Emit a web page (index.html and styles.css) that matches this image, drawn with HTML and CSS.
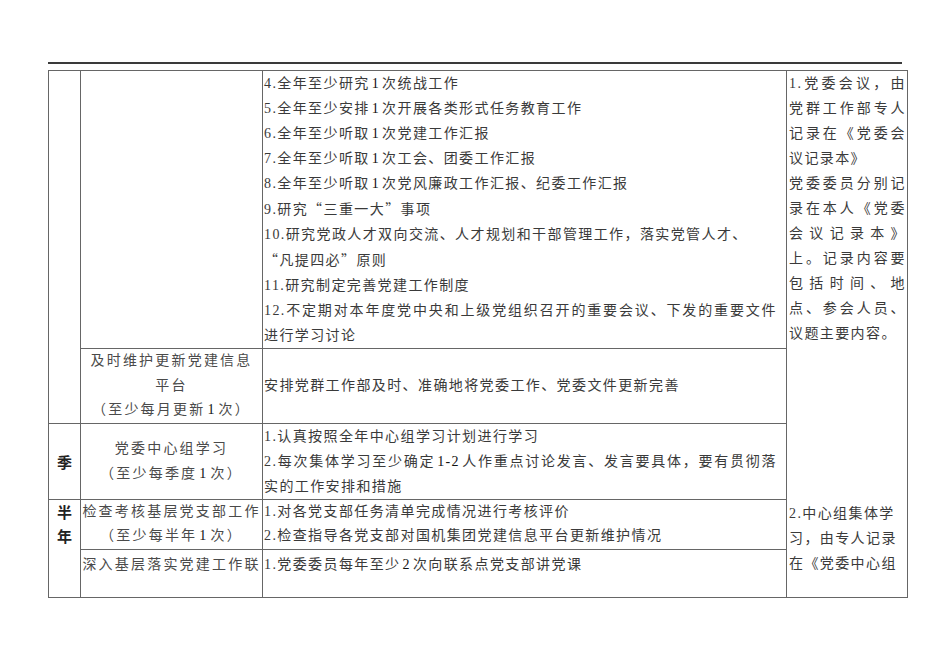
FILE: index.html
```html
<!DOCTYPE html>
<html lang="zh-CN">
<head>
<meta charset="utf-8">
<title>党委工作计划</title>
<link rel="stylesheet" href="styles.css">
</head>
<body>
<div class="page">
  <div class="rule"></div>
  <table class="plan">
    <colgroup>
      <col class="w1"><col class="w2"><col class="w3"><col class="w4">
    </colgroup>
    <tr class="r1">
      <td class="c1" rowspan="2"></td>
      <td class="c2"></td>
      <td class="c3">
        <div class="ln">4.全年至少研究<span class="n">1</span>次统战工作</div>
        <div class="ln">5.全年至少安排<span class="n">1</span>次开展各类形式任务教育工作</div>
        <div class="ln">6.全年至少听取<span class="n">1</span>次党建工作汇报</div>
        <div class="ln">7.全年至少听取<span class="n">1</span>次工会、团委工作汇报</div>
        <div class="ln">8.全年至少听取<span class="n">1</span>次党风廉政工作汇报、纪委工作汇报</div>
        <div class="ln">9.研究<span class="q">“</span>三重一大<span class="q">”</span>事项</div>
        <div class="ln">10.研究党政人才双向交流、人才规划和干部管理工作，落实党管人才、</div>
        <div class="ln"><span class="q">“</span>凡提四必<span class="q">”</span>原则</div>
        <div class="ln">11.研究制定完善党建工作制度</div>
        <div class="ln j">12.不定期对本年度党中央和上级党组织召开的重要会议、下发的重要文件</div>
        <div class="ln">进行学习讨论</div>
      </td>
      <td class="c4 a" rowspan="3">
        <div class="ln j">1.党委会议，由</div>
        <div class="ln j">党群工作部专人</div>
        <div class="ln j">记录在《党委会</div>
        <div class="ln">议记录本》</div>
        <div class="ln j">党委委员分别记</div>
        <div class="ln j">录在本人《党委</div>
        <div class="ln j">会议记录本》</div>
        <div class="ln j">上。记录内容要</div>
        <div class="ln j">包括时间、地</div>
        <div class="ln j">点、参会人员、</div>
        <div class="ln">议题主要内容。</div>
      </td>
    </tr>
    <tr class="r2">
      <td class="c2 mid tight">及时维护更新党建信息<br>平台<br>（至少每月更新<span class="n">1</span>次）</td>
      <td class="c3 mid tight">安排党群工作部及时、准确地将党委工作、党委文件更新完善</td>
    </tr>
    <tr class="r3">
      <td class="c1 mid">季</td>
      <td class="c2 mid">党委中心组学习<br>（至少每季度<span class="n">1</span>次）</td>
      <td class="c3">
        <div class="ln">1.认真按照全年中心组学习计划进行学习</div>
        <div class="ln j">2.每次集体学习至少确定<span class="n">1-2</span>人作重点讨论发言、发言要具体，要有贯彻落</div>
        <div class="ln">实的工作安排和措施</div>
      </td>
    </tr>
    <tr class="r4">
      <td class="c1 tight" rowspan="2">半<br>年</td>
      <td class="c2 tight">检查考核基层党支部工作<br>（至少每半年<span class="n">1</span>次）</td>
      <td class="c3 tight">
        <div class="ln">1.对各党支部任务清单完成情况进行考核评价</div>
        <div class="ln">2.检查指导各党支部对国机集团党建信息平台更新维护情况</div>
      </td>
      <td class="c4 b" rowspan="2">
        <div class="ln">2.中心组集体学</div>
        <div class="ln">习，由专人记录</div>
        <div class="ln">在《党委中心组</div>
      </td>
    </tr>
    <tr class="r5">
      <td class="c2 low">深入基层落实党建工作联</td>
      <td class="c3 low">
        <div class="ln">1.党委委员每年至少<span class="n">2</span>次向联系点党支部讲党课</div>
      </td>
    </tr>
  </table>
</div>
</body>
</html>
```

FILE: styles.css
```css
html, body {
  margin: 0;
  padding: 0;
  background: #ffffff;
}

.page {
  padding: 62px 0 0 48px;
}

.rule {
  width: 854px;
  height: 2px;
  background: #3a3a3a;
  margin-bottom: 6px;
}

.plan {
  border-collapse: collapse;
  table-layout: fixed;
  width: 859px;
  font-family: "Liberation Serif", "Noto Sans CJK SC", serif;
  font-size: 14px;
  line-height: 25px;
  color: #3a3a3a;
}

.w1 { width: 32px; }
.w2 { width: 182px; }
.w3 { width: 524px; }
.w4 { width: 121px; }

.plan td {
  border: 1px solid #666666;
  padding: 0;
  vertical-align: top;
}

.plan td.mid {
  vertical-align: middle;
}

.plan td.tight {
  line-height: 24.5px;
}

.plan td.low {
  padding-top: 2px;
}

.r5 { height: 48px; }

.c1 {
  text-align: center;
  font-family: "Noto Sans CJK SC", sans-serif;
  font-weight: bold;
  font-size: 15px;
  color: #222222;
}

.c2 {
  text-align: center;
  letter-spacing: 2.2px;
  color: #4a4a4a;
}

.c3 {
  padding: 0 9px 0 1px !important;
  letter-spacing: 1.4px;
}

.c3.low {
  padding-top: 2px !important;
}

.c4 {
  padding: 0 1px 0 2px !important;
  letter-spacing: 1.4px;
}

.c4.a {
  border-bottom-style: hidden !important;
}

.c4.b {
  border-top-style: hidden !important;
  padding-top: 2px !important;
}

.ln {
  display: block;
  white-space: nowrap;
}

.ln.j {
  text-align: justify;
  text-align-last: justify;
}

.n {
  margin: 0 2px;
  color: #111111;
}

.q {
  font-family: "Noto Sans CJK SC", sans-serif;
  font-feature-settings: "fwid" 1;
}
```
